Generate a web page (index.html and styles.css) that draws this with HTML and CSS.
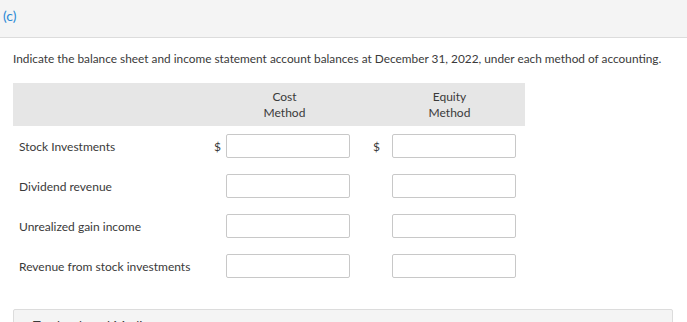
FILE: index.html
```html
<!DOCTYPE html>
<html lang="en">
<head>
    <meta charset="UTF-8">
    <meta name="viewport" content="width=device-width, initial-scale=1.0">
    <title>Question (c)</title>
    <link rel="stylesheet" href="styles.css">
</head>
<body>
    <div class="part-header">
        <span class="part-label">(c)</span>
    </div>

    <div class="part-body">
        <p class="prompt">Indicate the balance sheet and income statement account balances at December 31, 2022, under each method of accounting.</p>

        <div class="answer-table">
            <div class="head-row">
                <div class="head-cell head-cost">Cost<br>Method</div>
                <div class="head-cell head-equity">Equity<br>Method</div>
            </div>

            <div class="row">
                <div class="label">Stock Investments</div>
                <div class="dollar dollar-cost">$</div>
                <input type="text" class="amount">
                <div class="dollar dollar-equity">$</div>
                <input type="text" class="amount">
            </div>
            <div class="row">
                <div class="label">Dividend revenue</div>
                <div class="dollar dollar-cost"></div>
                <input type="text" class="amount">
                <div class="dollar dollar-equity"></div>
                <input type="text" class="amount">
            </div>
            <div class="row">
                <div class="label">Unrealized gain income</div>
                <div class="dollar dollar-cost"></div>
                <input type="text" class="amount">
                <div class="dollar dollar-equity"></div>
                <input type="text" class="amount">
            </div>
            <div class="row">
                <div class="label">Revenue from stock investments</div>
                <div class="dollar dollar-cost"></div>
                <input type="text" class="amount">
                <div class="dollar dollar-equity"></div>
                <input type="text" class="amount">
            </div>
        </div>

        <div class="media-box">Textbook and Media</div>
    </div>
</body>
</html>
```

FILE: styles.css
```css
:root {
    --text-dark: #3a3a3a;
    --link-blue: #2b8ad6;
    --band-gray: #e6e6e6;
    --panel-gray: #f4f4f4;
    --line-gray: #dcdcdc;
    --input-border: #c8c8c8;
}

* {
    margin: 0;
    padding: 0;
    box-sizing: border-box;
}

body {
    font-family: Lato, 'Open Sans', sans-serif;
    font-size: 12px;
    color: var(--text-dark);
    background-color: #ffffff;
    overflow: hidden;
}

.part-header {
    height: 38px;
    padding: 7px 0 0 3px;
    background-color: var(--panel-gray);
    border-bottom: 1px solid var(--line-gray);
}

.part-label {
    font-size: 14px;
    color: var(--link-blue);
}

.part-body {
    padding: 14px 14px 0 13px;
}

.prompt {
    font-size: 11.85px;
    line-height: 14px;
    margin-bottom: 17px;
}

.answer-table {
    width: 512px;
}

.head-row {
    display: flex;
    height: 43px;
    padding-top: 6px;
    background-color: var(--band-gray);
    line-height: 16px;
}

.head-cell {
    text-align: center;
}

.head-cost {
    width: 123px;
    margin-left: 210px;
}

.head-equity {
    width: 123px;
    margin-left: 42px;
}

.row {
    display: flex;
    align-items: center;
    height: 24px;
    margin-top: 16px;
}

.head-row + .row {
    margin-top: 8px;
}

.label {
    width: 195px;
    padding-left: 6px;
}

.dollar {
    text-align: right;
    padding-right: 5px;
}

.dollar-cost {
    width: 18px;
}

.dollar-equity {
    width: 42px;
    padding-right: 12px;
}

.amount {
    width: 124px;
    height: 24px;
    border: 1px solid var(--input-border);
    border-radius: 2px;
    background-color: #ffffff;
}

.media-box {
    margin-top: 31px;
    width: 660px;
    height: 30px;
    padding: 8px 0 0 19px;
    background-color: var(--panel-gray);
    border: 1px solid var(--line-gray);
    border-radius: 2px;
    font-size: 13px;
}
```
